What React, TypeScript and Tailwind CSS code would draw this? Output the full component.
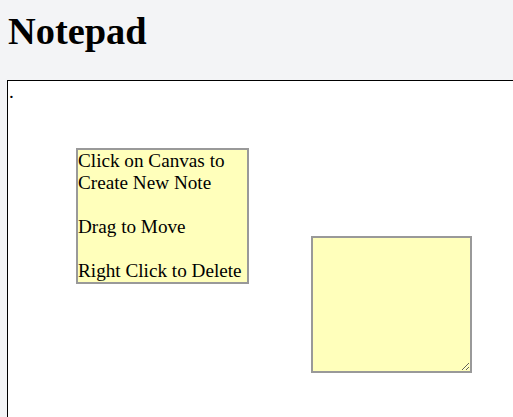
export default function App() {
  return (
    <div className="min-h-screen w-[513px] h-[417px] overflow-hidden bg-[#f3f4f6] font-['Liberation_Serif','Times_New_Roman',serif] text-black">
      <h1 className="pt-[9px] pl-[8px] text-[38.4px] font-bold leading-[44px]">Notepad</h1>
      <div className="relative mt-[27px] ml-[7px] w-[620px] h-[500px] border border-black bg-white text-[19.2px] leading-[22px]">
        <div className="pl-px">.</div>
        <div className="absolute left-[68px] top-[67px] w-[173px] h-[136px] border-2 border-[#999999] bg-[#ffffbb] whitespace-pre overflow-hidden">
          {"Click on Canvas to\nCreate New Note\n\nDrag to Move\n\nRight Click to Delete"}
        </div>
        <textarea
          className="absolute left-[303px] top-[155px] w-[161px] h-[137px] border-2 border-[#999999] bg-[#ffffbb] resize outline-none text-[19.2px] leading-[22px] p-0"
          defaultValue=""
        />
      </div>
    </div>
  );
}
